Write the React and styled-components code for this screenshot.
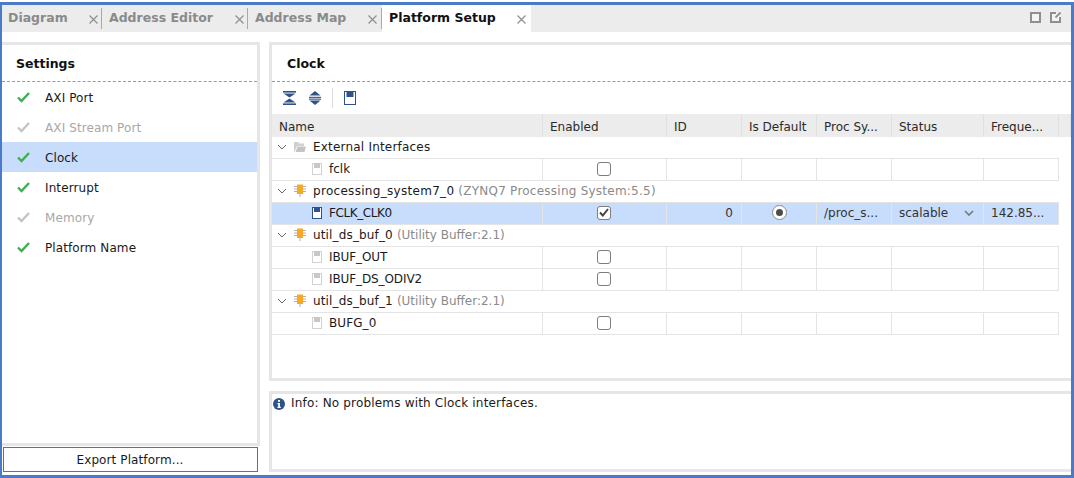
import React from 'react';
import styled,{createGlobalStyle} from 'styled-components';

const GlobalStyle=createGlobalStyle`
  html,body{
    margin:0;
    padding:0;
    background:#fff;
  }
  body{
    font-family:"DejaVu Sans",sans-serif;
    font-size:12px;
    color:#1a1a1a;
  }
`;

const Frame=styled.div`
  box-sizing:border-box;
  width:1074px;
  height:476px;
  margin-top:2px;
  border:solid #4a7bc8;
  border-width:3px 3px 3px 2px;
  display:flex;
  flex-direction:column;
  overflow:hidden;
`;

const TabBar=styled.div`
  height:27px;
  flex:none;
  background:#ececec;
  display:flex;
  align-items:stretch;
`;

const Tab=styled.div`
  box-sizing:border-box;
  width:${({$w})=>$w}px;
  display:flex;
  align-items:center;
  justify-content:space-between;
  padding:0 ${({$pr})=>$pr||4}px 2px ${({$pl})=>$pl||7}px;
  background:${({$active})=>$active?'#fff':'transparent'};
  color:${({$active})=>$active?'#111':'#8a8a8a'};
  font-weight:bold;
  font-size:12.5px;
  position:relative;
  &::after{
    content:"";
    display:${({$sep})=>$sep?'block':'none'};
    position:absolute;
    right:0;
    top:3px;
    bottom:3px;
    width:1px;
    background:#a9a9a9;
  }
`;

const CloseX=styled.svg`
  width:9px;
  height:9px;
  margin:3px 0 0;
  stroke:#8f8f8f;
  stroke-width:1.2;
  fill:none;
`;

const TabTools=styled.div`
  margin-left:auto;
  display:flex;
  align-items:center;
  gap:9px;
  padding:0 10px 2px 0;
`;

const Body=styled.div`
  flex:1;
  min-height:0;
  padding-top:10px;
  display:flex;
  gap:9px;
  background:#fff;
`;

const SideColumn=styled.div`
  width:258px;
  flex:none;
  display:flex;
  flex-direction:column;
`;

const SidePanel=styled.div`
  flex:1;
  border:solid #e6e6e6;
  border-width:3px 3px 3px 0;
`;

const PanelTitle=styled.div`
  box-sizing:border-box;
  height:37px;
  padding-left:${({$left})=>$left}px;
  font-weight:bold;
  font-size:12.5px;
  color:#111;
  border-bottom:1px dashed #9a9a9a;
  display:flex;
  align-items:center;
`;

const SideRow=styled.div`
  box-sizing:border-box;
  height:30px;
  display:flex;
  align-items:center;
  padding:1px 0 0 14px;
  gap:15px;
  letter-spacing:0.1px;
  background:${({$selected})=>$selected?'#c8dcfb':'transparent'};
  color:${({$off})=>$off?'#a8a8a8':'#1a1a1a'};
`;

const ExportButton=styled.button`
  box-sizing:border-box;
  height:25px;
  width:255px;
  margin:1px 0 3px 1px;
  background:#fff;
  border:1px solid #6f6f6f;
  font:12px "DejaVu Sans",sans-serif;
  letter-spacing:0.1px;
  color:#1a1a1a;
  padding:0 1px 0 0;
`;

const MainColumn=styled.div`
  flex:1;
  min-width:0;
  display:flex;
  flex-direction:column;
  gap:10px;
  padding-bottom:3px;
`;

const ClockPanel=styled.div`
  height:339px;
  box-sizing:border-box;
  border:solid #e6e6e6;
  border-width:3px 0 3px 3px;
  display:flex;
  flex-direction:column;
`;

const Toolbar=styled.div`
  height:32px;
  flex:none;
  display:flex;
  align-items:center;
  padding-left:11px;
`;

const ToolGap=styled.span`
  width:13px;
`;

const ToolDivider=styled.div`
  width:1px;
  height:20px;
  background:#dcdcdc;
  margin:0 11px 0 11px;
`;

const columns='271px 124px 75px 75px 75px 92px 75px';

const HeaderRow=styled.div`
  display:grid;
  grid-template-columns:${columns} 1fr;
  height:23px;
  background:#ececec;
  flex:none;
`;

const HeaderCell=styled.div`
  display:flex;
  align-items:center;
  padding:2px 0 0 7px;
  color:#2a2a2a;
  border-right:1px solid #e0e0e0;
  box-sizing:border-box;
  white-space:nowrap;
`;

const Row=styled.div`
  display:grid;
  grid-template-columns:${columns};
  width:787px;
  height:22px;
  box-sizing:border-box;
  border-bottom:1px solid #e4e4e4;
  background:${({$selected})=>$selected?'#c8dcfb':'#fff'};
`;

const NameCell=styled.div`
  grid-column:${({$span})=>$span?'1 / -1':'auto'};
  display:flex;
  align-items:center;
  padding:0 0 2px ${({$leaf})=>$leaf?40:5}px;
  gap:${({$leaf})=>$leaf?7:4}px;
  white-space:nowrap;
  box-sizing:border-box;
  border-right:${({$span})=>$span?'none':'1px solid #e4e4e4'};
`;

const TreeIcon=styled.span`
  display:inline-flex;
  width:13px;
  justify-content:flex-start;
  margin-left:3px;
  margin-right:2px;
`;

const Label=styled.span`
  letter-spacing:${({$ls})=>$ls||0}px;
`;

const Cell=styled.div`
  display:flex;
  align-items:center;
  justify-content:${({$align})=>$align||'flex-start'};
  padding:0 ${({$pr})=>$pr||0}px 2px ${({$pl})=>$pl||0}px;
  box-sizing:border-box;
  border-right:1px solid #e4e4e4;
  white-space:nowrap;
  color:#333;
`;

const Detail=styled.span`
  color:#8a8a8a;
  margin-left:4px;
  letter-spacing:${({$ls})=>$ls||0}px;
`;

const CheckBox=styled.span`
  box-sizing:border-box;
  width:14px;
  height:14px;
  border:1px solid #7d7d7d;
  border-radius:3px;
  background:#fff;
  display:flex;
  align-items:center;
  justify-content:center;
`;

const Radio=styled.span`
  box-sizing:border-box;
  width:15px;
  height:15px;
  border-radius:50%;
  border:1px solid #8c8c8c;
  background:#fff;
  display:flex;
  align-items:center;
  justify-content:center;
  &::after{
    content:"";
    width:7px;
    height:7px;
    border-radius:50%;
    background:#4d4d4d;
  }
`;

const InfoPanel=styled.div`
  flex:1;
  border:solid #e6e6e6;
  border-width:3px 0 3px 3px;
  padding:2px 0 0 1px;
  display:flex;
  align-items:flex-start;
  gap:6px;
  line-height:15px;
  letter-spacing:0.18px;
`;

const Check=({off})=>(
  <svg width="14" height="11" viewBox="0 0 14 11">
    <path d="M2 5.5 L5.5 9 L13 1" fill="none" stroke={off?'#c4c4c4':'#3cb04f'} strokeWidth="2.4"/>
  </svg>
);

const Close=()=>(
  <CloseX viewBox="0 0 9 9"><path d="M0.5 0.5 L8.5 8.5 M8.5 0.5 L0.5 8.5"/></CloseX>
);

const Chevron=({strong})=>(
  <svg width="10" height="6" viewBox="0 0 10 6">
    <path d="M1 1 L5 5 L9 1" fill="none" stroke={strong?'#777':'#666'} strokeWidth={strong?1.6:1}/>
  </svg>
);

const FolderIcon=()=>(
  <svg width="12" height="10" viewBox="0 0 12 10">
    <path d="M0 0 H4 L5 1.5 H10 V4 H3 L0.5 10 H0 Z" fill="#d0d0d0"/>
    <path d="M3.5 4.5 H12 L10.5 10 H1.5 Z" fill="#c4c4c4"/>
  </svg>
);

const PortIcon=({on})=>(
  <svg width="10" height="12" viewBox="0 0 10 12">
    <rect x="0.5" y="0.5" width="9" height="11" fill="#fff" stroke={on?'#2f5288':'#d2d2d2'}/>
    <rect x="2" y="0" width="6" height="5" fill={on?'#2f5288':'#c8c8c8'}/>
  </svg>
);

const ChipIcon=()=>(
  <svg width="12" height="13" viewBox="0 0 12 13">
    <path d="M0 2.5 H12 M0 5 H12 M0 7.5 H12 M6 10 V13" stroke="#b0b0b0" strokeWidth="1"/>
    <rect x="3" y="0.5" width="6" height="9.5" fill="#f9a825"/>
  </svg>
);

const ExpandAll=()=>(
  <svg width="13" height="14" viewBox="0 0 13 14" fill="#2f5288">
    <rect x="0" y="0" width="13" height="1.6"/>
    <path d="M0.5 2.4 H12.5 L6.5 6.6 Z"/>
    <path d="M0.5 11.6 H12.5 L6.5 7.4 Z"/>
    <rect x="0" y="12.4" width="13" height="1.6"/>
  </svg>
);

const CollapseAll=()=>(
  <svg width="12" height="14" viewBox="0 0 12 14" fill="#2f5288">
    <path d="M6 0 L11.5 4.6 H0.5 Z"/>
    <rect x="0" y="5.8" width="12" height="1.1"/>
    <rect x="0" y="7.6" width="12" height="1.1"/>
    <path d="M6 14 L11.5 9.6 H0.5 Z"/>
  </svg>
);

const SaveIcon=()=>(
  <svg width="12" height="14" viewBox="0 0 12 14">
    <rect x="0.5" y="0.5" width="11" height="13" fill="#fff" stroke="#2f5288"/>
    <rect x="2.5" y="0" width="7" height="6" fill="#2f5288"/>
  </svg>
);

const MaxIcon=()=>(
  <svg width="11" height="11" viewBox="0 0 11 11">
    <rect x="1" y="1" width="9" height="9" fill="#f4f4f4" stroke="#8f8f8f" strokeWidth="2"/>
  </svg>
);

const FloatIcon=()=>(
  <svg width="11" height="11" viewBox="0 0 11 11">
    <path d="M6 1 H1 V10 H10 V5" fill="#f4f4f4" stroke="#8f8f8f" strokeWidth="2"/>
    <path d="M5.5 5.5 L10.5 0.5" stroke="#8f8f8f" strokeWidth="1.8"/>
  </svg>
);

const InfoGlyph=styled.svg`
  margin-top:2px;
  flex:none;
`;

const InfoIcon=()=>(
  <InfoGlyph width="12" height="12" viewBox="0 0 12 12">
    <circle cx="6" cy="6" r="6" fill="#2f5288"/>
    <rect x="5" y="2" width="2" height="1.8" fill="#fff"/>
    <path d="M4.4 5 H7 V8.8 H7.8 V10 H4.4 V8.8 H5.2 V6.2 H4.4 Z" fill="#fff"/>
  </InfoGlyph>
);

const sideItems=[
  {label:'AXI Port'},
  {label:'AXI Stream Port',off:true},
  {label:'Clock',selected:true},
  {label:'Interrupt'},
  {label:'Memory',off:true},
  {label:'Platform Name'},
];

const heads=['Name','Enabled','ID','Is Default','Proc Sy...','Status','Freque...',''];

const tree=[
  {kind:'folder',name:'External Interfaces',ls:0.2},
  {kind:'port',name:'fclk'},
  {kind:'ip',name:'processing_system7_0',ls:0.3,detail:'(ZYNQ7 Processing System:5.5)',dls:0.24},
  {kind:'port',name:'FCLK_CLK0',ls:-0.4,selected:true},
  {kind:'ip',name:'util_ds_buf_0',ls:0.15,detail:'(Utility Buffer:2.1)'},
  {kind:'port',name:'IBUF_OUT',ls:-0.1},
  {kind:'port',name:'IBUF_DS_ODIV2',ls:-0.1},
  {kind:'ip',name:'util_ds_buf_1',ls:0.15,detail:'(Utility Buffer:2.1)'},
  {kind:'port',name:'BUFG_0',ls:0.1},
];

const GroupRow=({item})=>(
  <Row>
    <NameCell $span>
      <Chevron/>
      <TreeIcon>{item.kind==='folder'?<FolderIcon/>:<ChipIcon/>}</TreeIcon>
      <span>
        <Label $ls={item.ls}>{item.name}</Label>
        {item.detail&&<Detail $ls={item.dls}>{item.detail}</Detail>}
      </span>
    </NameCell>
  </Row>
);

const PortRow=({item})=>(
  <Row $selected={item.selected}>
    <NameCell $leaf>
      <PortIcon on={item.selected}/>
      <Label $ls={item.ls}>{item.name}</Label>
    </NameCell>
    <Cell $align="center" $pr={2}>
      <CheckBox>
        {item.selected&&(
          <svg width="10" height="9" viewBox="0 0 10 9">
            <path d="M1 4.5 L3.8 7.5 L9 1" fill="none" stroke="#444" strokeWidth="2"/>
          </svg>
        )}
      </CheckBox>
    </Cell>
    <Cell $align="flex-end" $pr={8}>{item.selected&&'0'}</Cell>
    <Cell $align="center">{item.selected&&<Radio/>}</Cell>
    <Cell $pl={7}>{item.selected&&'/proc_s...'}</Cell>
    <Cell $pl={7} $pr={9} $align="space-between">
      {item.selected&&<><span>scalable</span><Chevron strong/></>}
    </Cell>
    <Cell $pl={7}>{item.selected&&'142.85...'}</Cell>
  </Row>
);

const App=()=>{
  return (
    <>
      <GlobalStyle/>
      <Frame>
        <TabBar>
          <Tab $w={100} $pl={6} $sep>Diagram<Close/></Tab>
          <Tab $w={146} $sep>Address Editor<Close/></Tab>
          <Tab $w={134} $pr={5} $sep>Address Map<Close/></Tab>
          <Tab $w={149} $pr={5} $active>Platform Setup<Close/></Tab>
          <TabTools><MaxIcon/><FloatIcon/></TabTools>
        </TabBar>
        <Body>
          <SideColumn>
            <SidePanel>
              <PanelTitle $left={14}>Settings</PanelTitle>
              {sideItems.map((item)=>(
                <SideRow key={item.label} $selected={item.selected} $off={item.off}>
                  <Check off={item.off}/>
                  <span>{item.label}</span>
                </SideRow>
              ))}
            </SidePanel>
            <ExportButton>Export Platform...</ExportButton>
          </SideColumn>
          <MainColumn>
            <ClockPanel>
              <PanelTitle $left={15}>Clock</PanelTitle>
              <Toolbar>
                <ExpandAll/>
                <ToolGap/>
                <CollapseAll/>
                <ToolDivider/>
                <SaveIcon/>
              </Toolbar>
              <HeaderRow>
                {heads.map((h,i)=><HeaderCell key={i}>{h}</HeaderCell>)}
              </HeaderRow>
              {tree.map((item)=>(
                item.kind==='port'
                  ?<PortRow key={item.name} item={item}/>
                  :<GroupRow key={item.name} item={item}/>
              ))}
            </ClockPanel>
            <InfoPanel>
              <InfoIcon/>
              <span>Info: No problems with Clock interfaces.</span>
            </InfoPanel>
          </MainColumn>
        </Body>
      </Frame>
    </>
  );
};

export default App;
